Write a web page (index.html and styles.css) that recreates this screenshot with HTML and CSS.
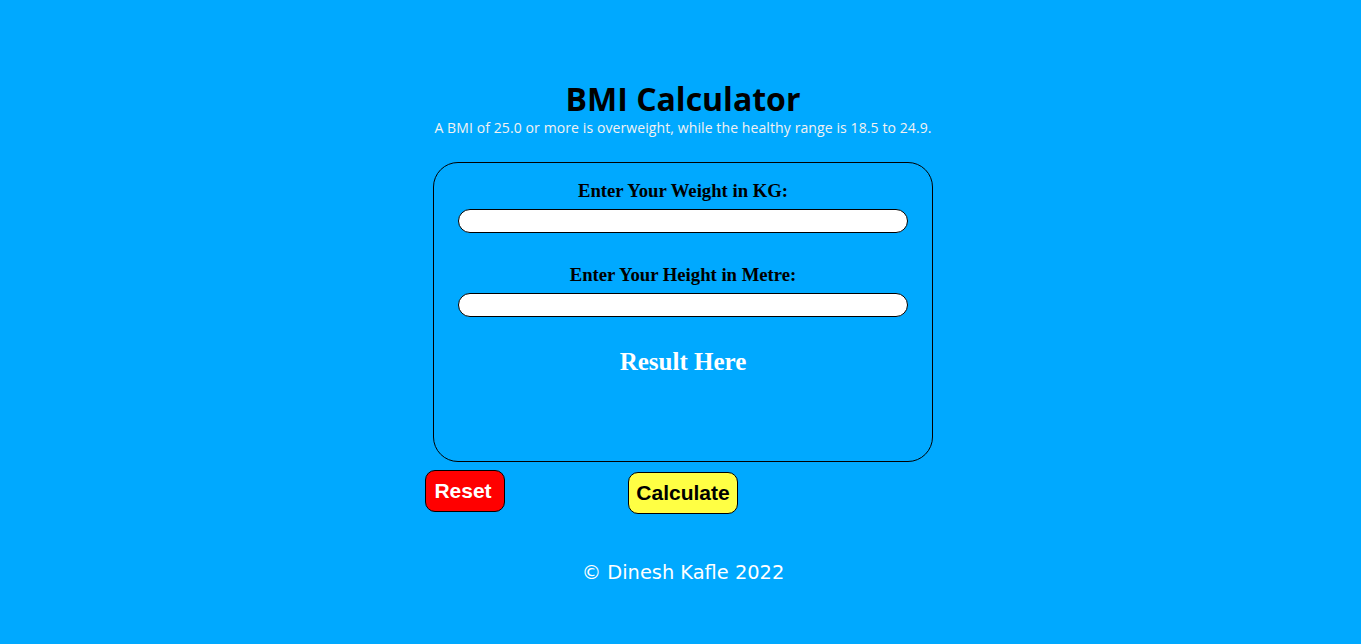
FILE: index.html
```html
<!DOCTYPE html>
<html>
<head>
<meta charset="utf-8">
<link rel="stylesheet" href="styles.css">
</head>
<body>
<main class="page">
  <header class="head">
    <h1 class="title">BMI Calculator</h1>
    <p class="sub">A BMI of 25.0 or more is overweight, while the healthy range is 18.5 to 24.9.</p>
  </header>
  <section class="card">
    <label class="label">Enter Your Weight in KG:</label>
    <input class="field" type="text">
    <label class="label label2">Enter Your Height in Metre:</label>
    <input class="field" type="text">
    <div class="result">Result Here</div>
  </section>
  <div class="buttons">
    <button class="btn reset">Reset</button>
    <button class="btn calc">Calculate</button>
  </div>
  <footer class="foot">© Dinesh Kafle 2022</footer>
</main>
</body>
</html>
```
FILE: styles.css
```css
html, body {
  margin: 0;
  padding: 0;
  background: #00a9ff;
  height: 100%;
}
.page {
  display: flex;
  flex-direction: column;
  align-items: center;
  padding-left: 5px;
  padding-top: 79px;
}
.head {
  display: flex;
  flex-direction: column;
  align-items: center;
}
.title {
  margin: 0;
  font-family: "Open Sans", sans-serif;
  font-weight: 700;
  font-size: 32px;
  line-height: 40px;
  color: #000;
}
.sub {
  margin: 0;
  font-family: "Open Sans", sans-serif;
  font-size: 14px;
  line-height: 17px;
  letter-spacing: 0.1px;
  color: #f2f2f2;
}
.card {
  box-sizing: border-box;
  width: 500px;
  height: 300px;
  margin-top: 26px;
  border: 1px solid #000;
  border-radius: 25px;
  display: flex;
  flex-direction: column;
  align-items: center;
  padding-top: 17px;
}
.label {
  font-family: "Liberation Serif", serif;
  font-weight: bold;
  font-size: 18.7px;
  line-height: 22px;
  color: #000;
}
.label2 {
  margin-top: 31px;
}
.field {
  box-sizing: border-box;
  width: 450px;
  height: 24px;
  margin-top: 7px;
  border: 1px solid #000;
  border-radius: 12px;
  background: #fff;
  padding: 0 10px;
}
.result {
  margin-top: 31px;
  font-family: "Liberation Serif", serif;
  font-weight: bold;
  font-size: 25px;
  color: #fff;
}
.buttons {
  width: 516px;
  margin-top: 8px;
  display: flex;
  align-items: flex-start;
}
.btn {
  box-sizing: border-box;
  height: 42px;
  border: 1px solid #000;
  border-radius: 10px;
  font-family: "Liberation Sans", Arial, sans-serif;
  font-weight: bold;
  font-size: 21px;
  padding: 0;
}
.reset {
  width: 80px;
  padding-right: 4px;
  background: #ff0000;
  color: #fff;
}
.calc {
  width: 110px;
  margin-left: 123px;
  margin-top: 2px;
  background: #ffff44;
  color: #000;
}
.foot {
  margin-top: 47px;
  font-family: "DejaVu Sans", sans-serif;
  font-size: 19.4px;
  color: #fff;
}
```
